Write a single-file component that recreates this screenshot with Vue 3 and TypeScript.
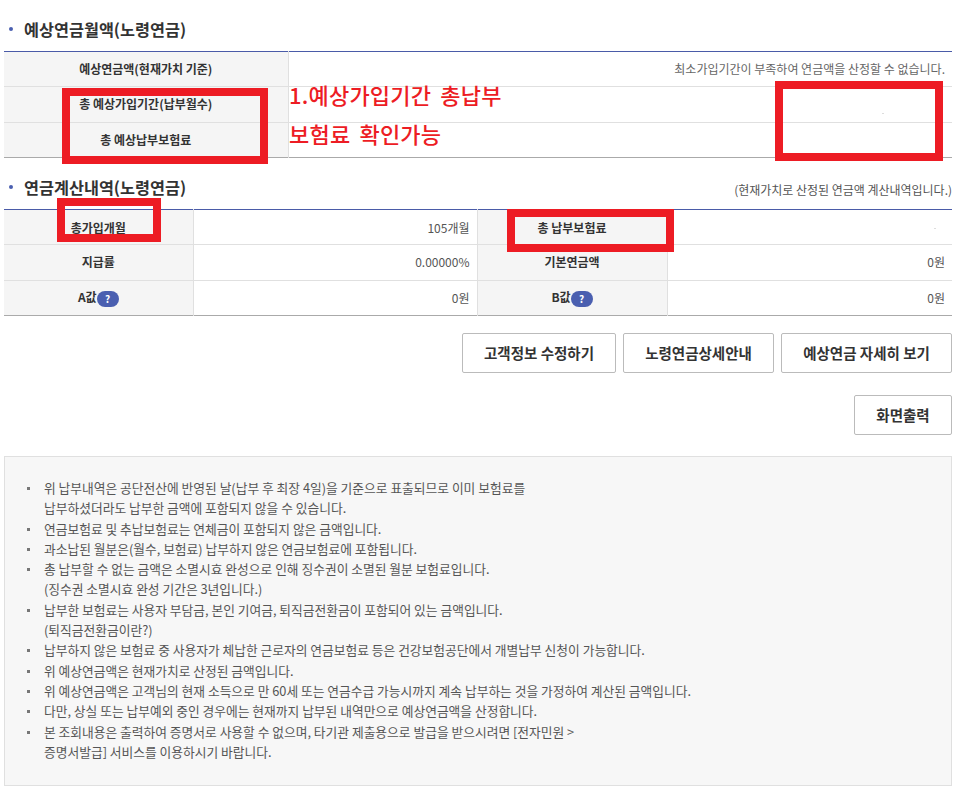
<script setup lang="ts">
interface Note { lines: string[] }
const notes: Note[] = [
  { lines: ['위 납부내역은 공단전산에 반영된 날(납부 후 최장 4일)을 기준으로 표출되므로 이미 보험료를', '납부하셨더라도 납부한 금액에 포함되지 않을 수 있습니다.'] },
  { lines: ['연금보험료 및 추납보험료는 연체금이 포함되지 않은 금액입니다.'] },
  { lines: ['과소납된 월분은(월수, 보험료) 납부하지 않은 연금보험료에 포함됩니다.'] },
  { lines: ['총 납부할 수 없는 금액은 소멸시효 완성으로 인해 징수권이 소멸된 월분 보험료입니다.', '(징수권 소멸시효 완성 기간은 3년입니다.)'] },
  { lines: ['납부한 보험료는 사용자 부담금, 본인 기여금, 퇴직금전환금이 포함되어 있는 금액입니다.', '(퇴직금전환금이란?)'] },
  { lines: ['납부하지 않은 보험료 중 사용자가 체납한 근로자의 연금보험료 등은 건강보험공단에서 개별납부 신청이 가능합니다.'] },
  { lines: ['위 예상연금액은 현재가치로 산정된 금액입니다.'] },
  { lines: ['위 예상연금액은 고객님의 현재 소득으로 만 60세 또는 연금수급 가능시까지 계속 납부하는 것을 가정하여 계산된 금액입니다.'] },
  { lines: ['다만, 상실 또는 납부예외 중인 경우에는 현재까지 납부된 내역만으로 예상연금액을 산정합니다.'] },
  { lines: ['본 조회내용은 출력하여 증명서로 사용할 수 없으며, 타기관 제출용으로 발급을 받으시려면 [전자민원 >', '증명서발급] 서비스를 이용하시기 바랍니다.'] },
]
</script>

<template>
  <div class="page">
    <div class="sec-head first">
      <h2 class="title"><i class="dot"></i>예상연금월액(노령연금)</h2>
    </div>
    <table class="tbl one">
      <colgroup><col class="c1" /><col /></colgroup>
      <tbody>
        <tr><th>예상연금액(현재가치 기준)</th><td>최소가입기간이 부족하여 연금액을 산정할 수 없습니다.</td></tr>
        <tr><th class="up">총 예상가입기간(납부월수)</th><td><i class="speck s1"></i></td></tr>
        <tr><th>총 예상납부보험료</th><td></td></tr>
      </tbody>
    </table>

    <div class="sec-head second">
      <h2 class="title"><i class="dot"></i>연금계산내역(노령연금)</h2>
      <span class="sub">(현재가치로 산정된 연금액 계산내역입니다.)</span>
    </div>
    <table class="tbl two">
      <colgroup><col class="c2" /><col class="c3" /><col class="c4" /><col /></colgroup>
      <tbody>
        <tr><th class="low">총가입개월</th><td class="low">105개월</td><th class="low">총 납부보험료</th><td><i class="speck s2"></i></td></tr>
        <tr><th>지급률</th><td>0.00000%</td><th>기본연금액</th><td>0원</td></tr>
        <tr>
          <th>A값<span class="q">?</span></th><td>0원</td>
          <th>B값<span class="q">?</span></th><td>0원</td>
        </tr>
      </tbody>
    </table>

    <div class="btns">
      <button class="btn b1">고객정보 수정하기</button>
      <button class="btn b2">노령연금상세안내</button>
      <button class="btn b3">예상연금 자세히 보기</button>
    </div>
    <div class="btns print">
      <button class="btn b4">화면출력</button>
    </div>

    <ul class="notes">
      <li v-for="(n, i) in notes" :key="i">
        <span v-for="(l, j) in n.lines" :key="j" class="ln">{{ l }}</span>
      </li>
    </ul>

    <div class="mark m1"></div>
    <div class="mark m2"></div>
    <div class="mark m3"></div>
    <div class="mark m4"></div>
    <div class="memo">
      <p>1.예상가입기간 총납부</p>
      <p>보험료 확인가능</p>
    </div>
  </div>
</template>

<style scoped>
.page {
  position: relative;
  width: 959px;
  height: 789px;
  overflow: hidden;
  box-sizing: border-box;
  padding: 0 7px 0 4px;
  background: #fff;
  font-family: "Noto Sans CJK KR", "Noto Sans", sans-serif;
  font-size: 12px;
  color: #333;
}
.sec-head {
  display: flex;
  justify-content: space-between;
  align-items: center;
}
.sec-head.first { height: 51px; padding-top: 7px; box-sizing: border-box; }
.sec-head.second { height: 51px; padding-top: 8px; box-sizing: border-box; }
.title {
  margin: 0;
  display: flex;
  align-items: center;
  font-size: 16.3px;
  font-weight: 700;
  color: #333;
  line-height: 20px;
}
.dot {
  width: 4px;
  height: 4px;
  border-radius: 50%;
  background: #4a5fb0;
  margin: 0 11px 0 5px;
}
.sub { font-size: 12px; color: #555; letter-spacing: -0.02px; margin-top: 5px; }
.tbl {
  width: 948px;
  border-collapse: collapse;
  table-layout: fixed;
  border-top: 1px solid #4a5ba8;
  border-bottom: 1px solid #aaa;
}
.tbl th, .tbl td {
  padding: 0;
  font-size: 12px;
  border-bottom: 1px solid #e0e0e0;
  line-height: 16px;
}
.tbl tr:last-child th, .tbl tr:last-child td { border-bottom: 0; }
.tbl th {
  background: #f5f5f5;
  font-weight: 700;
  color: #333;
  text-align: center;
  border-right: 1px solid #e0e0e0;
}
.tbl th + td + th { border-left: 1px solid #e0e0e0; }
.tbl th.up { padding-bottom: 1px; }
.tbl .low { padding-top: 1px; }
.tbl td {
  text-align: right;
  color: #555;
  padding-right: 7px;
}
.tbl.one tr { height: 35.33px; }
.tbl.one td { color: #666; }
.tbl.two tr { height: 35.33px; }
.c1 { width: 284px; }
.c2 { width: 189px; }
.c3 { width: 284px; }
.c4 { width: 190px; }
.speck {
  display: inline-block;
  width: 2px;
  height: 1px;
  background: #ddd;
  vertical-align: middle;
}
.s1 { margin-right: 61px; vertical-align: -6px; }
.s2 { margin-right: 9px; }
.q {
  display: inline-block;
  width: 22px;
  height: 16px;
  line-height: 16px;
  border-radius: 8px;
  background: #4a5fb0;
  color: #fff;
  font-size: 10px;
  font-weight: 700;
  vertical-align: -1px;
}
.btns {
  display: flex;
  justify-content: flex-end;
  gap: 7px;
  margin-top: 17px;
}
.btns.print { margin-top: 22px; }
.btn {
  height: 40px;
  background: #fff;
  border: 1px solid #bbb;
  border-radius: 2px;
  font: 700 14.5px "Noto Sans CJK KR", "Noto Sans", sans-serif;
  color: #333;
  padding: 0;
}
.b1 { width: 154px; }
.b2 { width: 151px; }
.b3 { width: 171px; }
.b4 { width: 98px; }
.notes {
  list-style: none;
  margin: 21px 0 0;
  padding: 21px 20px 0;
  box-sizing: border-box;
  height: 330px;
  width: 948px;
  background: #f7f7f7;
  border: 1px solid #e0e0e0;
  font-size: 12.75px;
  line-height: 20.3px;
  color: #555;
}
.notes li {
  position: relative;
  padding-left: 19px;
}
.notes li::before {
  content: "";
  position: absolute;
  left: 2px;
  top: 9px;
  width: 3px;
  height: 3px;
  background: #777;
}
.ln { display: block; }
.mark {
  position: absolute;
  box-sizing: border-box;
  border: 8px solid #ed1c24;
}
.m1 { left: 62px; top: 88px; width: 206px; height: 76px; }
.m2 { left: 775px; top: 81px; width: 168px; height: 80px; }
.m3 { left: 57px; top: 198px; width: 104px; height: 44px; }
.m4 { left: 507px; top: 209px; width: 167px; height: 43px; }
.memo {
  position: absolute;
  left: 289px;
  top: 75px;
  color: #ed1c24;
  font-size: 22px;
  font-weight: 500;
  letter-spacing: 0.2px;
  word-spacing: 4px;
  line-height: 39px;
  font-family: "Noto Sans CJK KR", sans-serif;
}
.memo p { margin: 0; }
</style>
